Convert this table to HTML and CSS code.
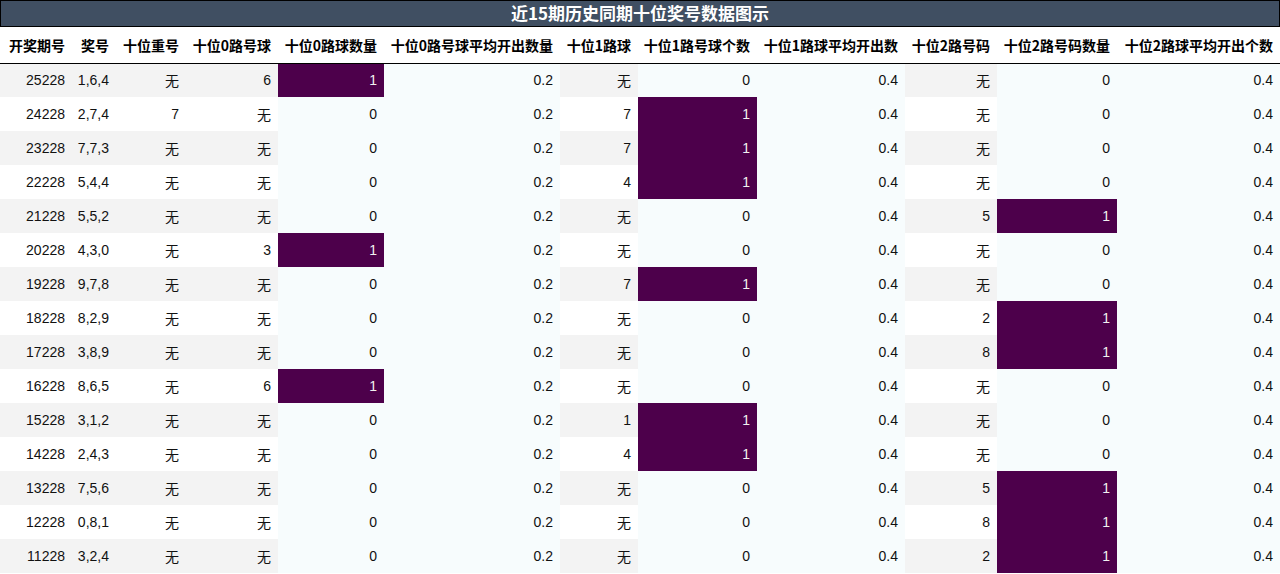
FILE: index.html
```html
<!DOCTYPE html>
<html lang="zh">
<head>
<meta charset="utf-8">
<link rel="stylesheet" href="styles.css">
</head>
<body>
<div class="title">近15期历史同期十位奖号数据图示</div>
<table class="data">
<colgroup>
<col class="c1"><col class="c2"><col class="c3"><col class="c4"><col class="c5"><col class="c6">
<col class="c7"><col class="c8"><col class="c9"><col class="c10"><col class="c11"><col class="c12">
</colgroup>
<thead>
<tr><th>开奖期号</th><th>奖号</th><th>十位重号</th><th>十位0路号球</th><th>十位0路球数量</th><th>十位0路号球平均开出数量</th><th>十位1路球</th><th>十位1路号球个数</th><th>十位1路球平均开出数</th><th>十位2路号码</th><th>十位2路号码数量</th><th>十位2路球平均开出个数</th></tr>
</thead>
<tbody id="rows">
<tr><td>25228</td><td>1,6,4</td><td>无</td><td>6</td><td class="hi">1</td><td class="lo">0.2</td><td>无</td><td class="lo">0</td><td class="lo">0.4</td><td>无</td><td class="lo">0</td><td class="lo">0.4</td></tr>
<tr><td>24228</td><td>2,7,4</td><td>7</td><td>无</td><td class="lo">0</td><td class="lo">0.2</td><td>7</td><td class="hi">1</td><td class="lo">0.4</td><td>无</td><td class="lo">0</td><td class="lo">0.4</td></tr>
<tr><td>23228</td><td>7,7,3</td><td>无</td><td>无</td><td class="lo">0</td><td class="lo">0.2</td><td>7</td><td class="hi">1</td><td class="lo">0.4</td><td>无</td><td class="lo">0</td><td class="lo">0.4</td></tr>
<tr><td>22228</td><td>5,4,4</td><td>无</td><td>无</td><td class="lo">0</td><td class="lo">0.2</td><td>4</td><td class="hi">1</td><td class="lo">0.4</td><td>无</td><td class="lo">0</td><td class="lo">0.4</td></tr>
<tr><td>21228</td><td>5,5,2</td><td>无</td><td>无</td><td class="lo">0</td><td class="lo">0.2</td><td>无</td><td class="lo">0</td><td class="lo">0.4</td><td>5</td><td class="hi">1</td><td class="lo">0.4</td></tr>
<tr><td>20228</td><td>4,3,0</td><td>无</td><td>3</td><td class="hi">1</td><td class="lo">0.2</td><td>无</td><td class="lo">0</td><td class="lo">0.4</td><td>无</td><td class="lo">0</td><td class="lo">0.4</td></tr>
<tr><td>19228</td><td>9,7,8</td><td>无</td><td>无</td><td class="lo">0</td><td class="lo">0.2</td><td>7</td><td class="hi">1</td><td class="lo">0.4</td><td>无</td><td class="lo">0</td><td class="lo">0.4</td></tr>
<tr><td>18228</td><td>8,2,9</td><td>无</td><td>无</td><td class="lo">0</td><td class="lo">0.2</td><td>无</td><td class="lo">0</td><td class="lo">0.4</td><td>2</td><td class="hi">1</td><td class="lo">0.4</td></tr>
<tr><td>17228</td><td>3,8,9</td><td>无</td><td>无</td><td class="lo">0</td><td class="lo">0.2</td><td>无</td><td class="lo">0</td><td class="lo">0.4</td><td>8</td><td class="hi">1</td><td class="lo">0.4</td></tr>
<tr><td>16228</td><td>8,6,5</td><td>无</td><td>6</td><td class="hi">1</td><td class="lo">0.2</td><td>无</td><td class="lo">0</td><td class="lo">0.4</td><td>无</td><td class="lo">0</td><td class="lo">0.4</td></tr>
<tr><td>15228</td><td>3,1,2</td><td>无</td><td>无</td><td class="lo">0</td><td class="lo">0.2</td><td>1</td><td class="hi">1</td><td class="lo">0.4</td><td>无</td><td class="lo">0</td><td class="lo">0.4</td></tr>
<tr><td>14228</td><td>2,4,3</td><td>无</td><td>无</td><td class="lo">0</td><td class="lo">0.2</td><td>4</td><td class="hi">1</td><td class="lo">0.4</td><td>无</td><td class="lo">0</td><td class="lo">0.4</td></tr>
<tr><td>13228</td><td>7,5,6</td><td>无</td><td>无</td><td class="lo">0</td><td class="lo">0.2</td><td>无</td><td class="lo">0</td><td class="lo">0.4</td><td>5</td><td class="hi">1</td><td class="lo">0.4</td></tr>
<tr><td>12228</td><td>0,8,1</td><td>无</td><td>无</td><td class="lo">0</td><td class="lo">0.2</td><td>无</td><td class="lo">0</td><td class="lo">0.4</td><td>8</td><td class="hi">1</td><td class="lo">0.4</td></tr>
<tr><td>11228</td><td>3,2,4</td><td>无</td><td>无</td><td class="lo">0</td><td class="lo">0.2</td><td>无</td><td class="lo">0</td><td class="lo">0.4</td><td>2</td><td class="hi">1</td><td class="lo">0.4</td></tr>
</tbody>
</table>
</body>
</html>
```

FILE: styles.css
```css
html, body {
  margin: 0;
  padding: 0;
  background: #ffffff;
}
body {
  font-family: "Liberation Sans", "Noto Sans CJK SC", Arial, sans-serif;
  color: #111111;
  width: 1280px;
  overflow: hidden;
}
.title {
  box-sizing: border-box;
  height: 27px;
  border: 1px solid #000000;
  background: #404f62;
  color: #ffffff;
  font-family: "Noto Sans CJK SC", sans-serif;
  font-weight: bold;
  font-size: 17px;
  line-height: 24px;
  text-align: center;
}
.data {
  width: 1280px;
  border-collapse: collapse;
  table-layout: fixed;
  font-size: 14px;
}
.c1 { width: 72px; }
.c2 { width: 44px; }
.c3 { width: 70px; }
.c4 { width: 92px; }
.c5 { width: 106px; }
.c6 { width: 176px; }
.c7 { width: 78px; }
.c8 { width: 119px; }
.c9 { width: 148px; }
.c10 { width: 92px; }
.c11 { width: 120px; }
.c12 { width: 163px; }
.data th {
  height: 36px;
  padding: 0 7px 0 0;
  text-align: right;
  font-family: "Noto Sans CJK SC", sans-serif;
  font-weight: bold;
  font-size: 14px;
  color: #000000;
  white-space: nowrap;
  border-bottom: 1px solid #000000;
  box-sizing: border-box;
}
.data td {
  height: 34px;
  padding: 0 7px 0 0;
  text-align: right;
  white-space: nowrap;
  box-sizing: border-box;
  font-family: "Liberation Sans", "Noto Sans CJK SC", sans-serif;
}
.data tbody tr:nth-child(odd) td {
  background: #f3f3f3;
}
.data tbody tr:nth-child(even) td {
  background: #ffffff;
}
.data tbody tr td.lo {
  background: #f7fcfd;
}
.data tbody tr td.hi {
  background: #4d004b;
  color: #f1f1f1;
}
```
